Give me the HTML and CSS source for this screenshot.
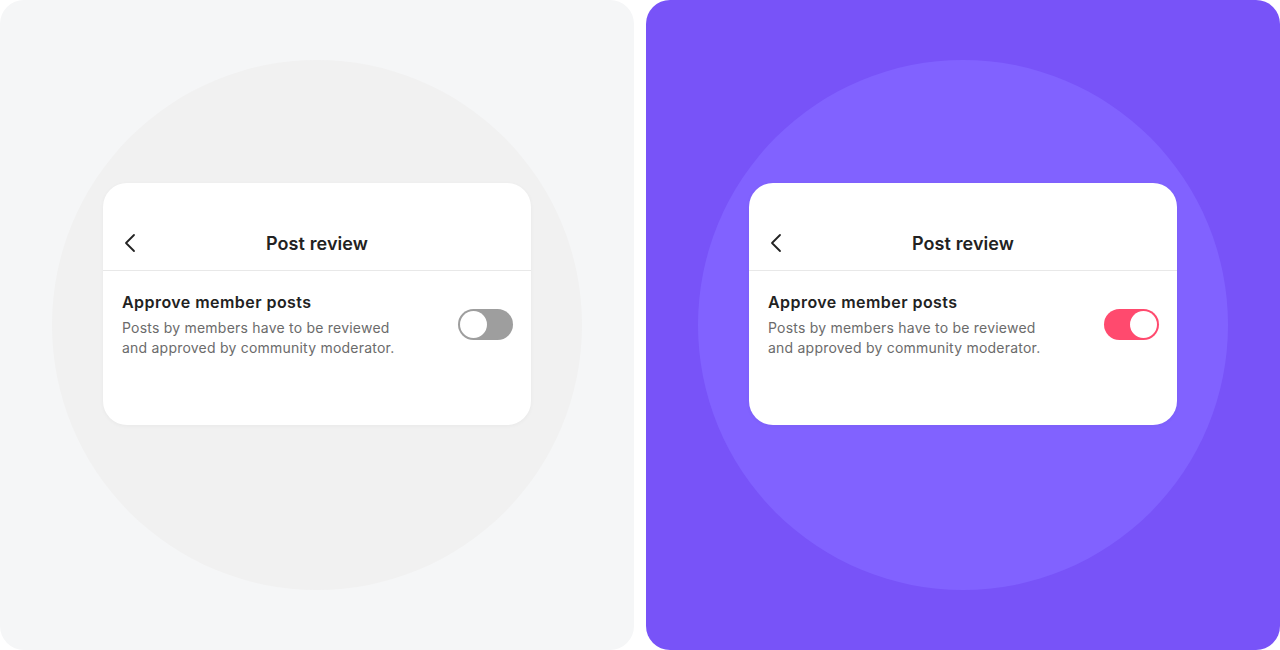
FILE: index.html
```html
<!DOCTYPE html>
<html lang="en">
<head>
    <meta charset="UTF-8">
    <meta name="viewport" content="width=device-width, initial-scale=1.0">
    <title>Post review</title>
    <link rel="stylesheet" href="styles.css">
</head>
<body>
    <section class="panel panel-light">
        <div class="circle">
            <div class="card">
                <header class="card-header">
                    <svg class="back" width="24" height="24" viewBox="0 0 24 24" fill="none" stroke="#222" stroke-width="1.8" stroke-linecap="round" stroke-linejoin="round"><path d="M16 4 L8 12 L16 20"/></svg>
                    <h1>Post review</h1>
                </header>
                <div class="setting">
                    <div class="setting-text">
                        <h2>Approve member posts</h2>
                        <p>Posts by members have to be reviewed<br>and approved by community moderator.</p>
                    </div>
                    <span class="toggle"><span class="knob"></span></span>
                </div>
            </div>
        </div>
    </section>

    <section class="panel panel-purple">
        <div class="circle">
            <div class="card">
                <header class="card-header">
                    <svg class="back" width="24" height="24" viewBox="0 0 24 24" fill="none" stroke="#222" stroke-width="1.8" stroke-linecap="round" stroke-linejoin="round"><path d="M16 4 L8 12 L16 20"/></svg>
                    <h1>Post review</h1>
                </header>
                <div class="setting">
                    <div class="setting-text">
                        <h2>Approve member posts</h2>
                        <p>Posts by members have to be reviewed<br>and approved by community moderator.</p>
                    </div>
                    <span class="toggle on"><span class="knob"></span></span>
                </div>
            </div>
        </div>
    </section>
</body>
</html>
```

FILE: styles.css
```css
body {
    margin: 0;
    height: 650px;
    display: flex;
    gap: 12px;
    background: #fff;
    font-family: Inter, "Noto Sans", sans-serif;
    color: #222;
    overflow: hidden;
}
.panel {
    width: 634px;
    height: 650px;
    border-radius: 24px;
    display: flex;
    justify-content: center;
    align-items: center;
}
.panel-light {
    background: #f5f6f7;
}
.panel-purple {
    background: #7853f8;
}
.circle {
    width: 530px;
    height: 530px;
    border-radius: 50%;
    box-sizing: border-box;
    padding-top: 123px;
    display: flex;
    flex-direction: column;
    align-items: center;
}
.panel-light .circle {
    background: #f1f1f1;
}
.panel-purple .circle {
    background: #8162ff;
}
.card {
    width: 428px;
    height: 242px;
    background: #fff;
    border-radius: 24px;
    box-shadow: 0 1px 4px rgba(0, 0, 0, 0.04);
}
.card-header {
    height: 88px;
    box-sizing: border-box;
    padding: 0 18px 14px;
    border-bottom: 1px solid #e8e8e8;
    display: flex;
    align-items: flex-end;
    position: relative;
}
.card-header h1 {
    flex: 1;
    margin: 0;
    text-align: center;
    font-size: 18px;
    line-height: 24px;
    font-weight: 600;
    letter-spacing: 0.1px;
    color: #222;
}
.back {
    position: absolute;
    left: 15px;
    bottom: 15px;
}
.setting {
    padding: 20px 18px 0 19px;
    display: flex;
    align-items: center;
    justify-content: space-between;
}
.setting h2 {
    margin: 0;
    font-size: 16px;
    line-height: 22px;
    font-weight: 600;
    letter-spacing: 0.45px;
    color: #222;
}
.setting p {
    margin: 5px 0 0;
    font-size: 14px;
    line-height: 20px;
    letter-spacing: 0.22px;
    color: #6b6b6b;
}
.toggle {
    width: 55px;
    height: 31px;
    border-radius: 16px;
    background: #9e9e9e;
    box-sizing: border-box;
    padding: 2px;
    display: flex;
    margin-top: -1px;
}
.toggle.on {
    background: #ff4a6e;
    justify-content: flex-end;
}
.knob {
    width: 27px;
    height: 27px;
    border-radius: 50%;
    background: #fff;
}
```
